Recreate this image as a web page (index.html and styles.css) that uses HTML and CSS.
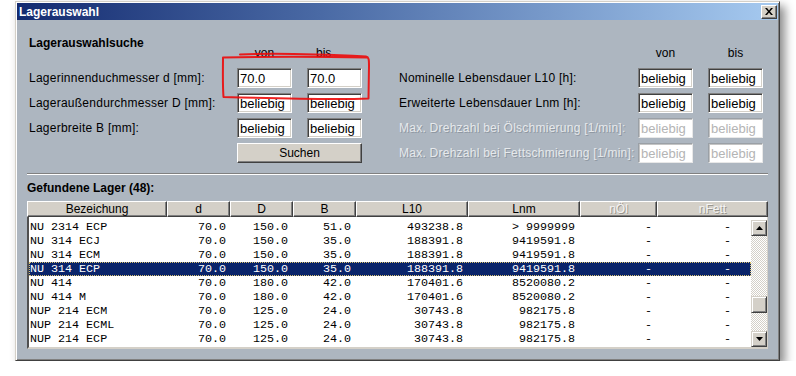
FILE: index.html
```html
<!DOCTYPE html>
<html lang="de">
<head>
    <meta charset="UTF-8">
    <meta name="viewport" content="width=device-width, initial-scale=1.0">
    <title>Lagerauswahl</title>
    <link rel="stylesheet" href="styles.css">
</head>
<body>
    <div class="window">
        <div class="titlebar">
            <span class="title">Lagerauswahl</span>
            <button class="close">
                <svg width="8" height="7" viewBox="0 0 8 7"><path d="M0 0h2l2 2.5L6 0h2L5 3.5 8 7H6L4 4.5 2 7H0l3-3.5z" fill="#000"/></svg>
            </button>
        </div>
        <div class="panel">
            <div class="search">
                <div class="heading">Lagerauswahlsuche</div>
                <div class="filters">
                    <div class="filter-grid left">
                        <span></span>
                        <span class="range-head">von</span>
                        <span class="range-head bis-left">bis</span>

                        <label>Lagerinnenduchmesser d [mm]:</label>
                        <input type="text" value="70.0">
                        <input type="text" value="70.0">

                        <label>Lagerau&szlig;endurchmesser D [mm]:</label>
                        <input type="text" value="beliebig">
                        <input type="text" value="beliebig">

                        <label>Lagerbreite B [mm]:</label>
                        <input type="text" value="beliebig">
                        <input type="text" value="beliebig">

                        <span></span>
                        <button class="search-btn">Suchen</button>
                    </div>
                    <div class="filter-grid right">
                        <span></span>
                        <span class="range-head">von</span>
                        <span class="range-head">bis</span>

                        <label>Nominelle Lebensdauer L10 [h]:</label>
                        <input type="text" value="beliebig">
                        <input type="text" value="beliebig">

                        <label>Erweiterte Lebensdauer Lnm [h]:</label>
                        <input type="text" value="beliebig">
                        <input type="text" value="beliebig">

                        <label class="disabled">Max. Drehzahl bei &Ouml;lschmierung [1/min]:</label>
                        <input type="text" value="beliebig" disabled>
                        <input type="text" value="beliebig" disabled>

                        <label class="disabled">Max. Drehzahl bei Fettschmierung [1/min]:</label>
                        <input type="text" value="beliebig" disabled>
                        <input type="text" value="beliebig" disabled>
                    </div>
                </div>
            </div>

            <div class="divider"></div>

            <div class="results">
                <div class="heading">Gefundene Lager (48):</div>
                <div class="list">
                    <div class="list-head">
                        <span>Bezeichung</span>
                        <span>d</span>
                        <span>D</span>
                        <span>B</span>
                        <span>L10</span>
                        <span>Lnm</span>
                        <span class="disabled">n&Ouml;l</span>
                        <span class="disabled">nFett</span>
                    </div>
                    <div class="list-body">
                        <div class="rows">
                            <div class="row"><span>NU 2314 ECP</span><span>70.0</span><span>150.0</span><span>51.0</span><span>493238.8</span><span>&gt; 9999999</span><span>-</span><span>-</span></div>
                            <div class="row"><span>NU 314 ECJ</span><span>70.0</span><span>150.0</span><span>35.0</span><span>188391.8</span><span>9419591.8</span><span>-</span><span>-</span></div>
                            <div class="row"><span>NU 314 ECM</span><span>70.0</span><span>150.0</span><span>35.0</span><span>188391.8</span><span>9419591.8</span><span>-</span><span>-</span></div>
                            <div class="row selected"><span>NU 314 ECP</span><span>70.0</span><span>150.0</span><span>35.0</span><span>188391.8</span><span>9419591.8</span><span>-</span><span>-</span></div>
                            <div class="row"><span>NU 414</span><span>70.0</span><span>180.0</span><span>42.0</span><span>170401.6</span><span>8520080.2</span><span>-</span><span>-</span></div>
                            <div class="row"><span>NU 414 M</span><span>70.0</span><span>180.0</span><span>42.0</span><span>170401.6</span><span>8520080.2</span><span>-</span><span>-</span></div>
                            <div class="row"><span>NUP 214 ECM</span><span>70.0</span><span>125.0</span><span>24.0</span><span>30743.8</span><span>982175.8</span><span>-</span><span>-</span></div>
                            <div class="row"><span>NUP 214 ECML</span><span>70.0</span><span>125.0</span><span>24.0</span><span>30743.8</span><span>982175.8</span><span>-</span><span>-</span></div>
                            <div class="row"><span>NUP 214 ECP</span><span>70.0</span><span>125.0</span><span>24.0</span><span>30743.8</span><span>982175.8</span><span>-</span><span>-</span></div>
                        </div>
                        <div class="vscroll">
                            <div class="sb-btn">
                                <svg width="7" height="4" viewBox="0 0 7 4"><path d="M3.5 0L7 4H0z" fill="#000"/></svg>
                            </div>
                            <div class="sb-track"><div class="sb-thumb"></div></div>
                            <div class="sb-btn">
                                <svg width="7" height="4" viewBox="0 0 7 4"><path d="M0 0h7L3.5 4z" fill="#000"/></svg>
                            </div>
                        </div>
                    </div>
                </div>
            </div>
        </div>

        <!-- hand drawn marker around the d filter -->
        <svg class="marker" width="765" height="360" viewBox="0 0 765 360">
            <path d="M225 54.5C260 53 320 55 351 56.5C354 57 354 60 354 66L353.5 98.5C330 99.5 262 98.5 208.5 97C207.5 85 208 70 208 57.5C232 57 300 56.5 352 57.5" fill="none" stroke="#ec0a0a" stroke-width="2" stroke-linecap="round" stroke-linejoin="round" opacity="0.9"/>
        </svg>
    </div>
</body>
</html>
```

FILE: styles.css
```css
*{
    box-sizing: border-box;
}
body{
    margin: 0;
    background: #ffffff;
    font-family: "Liberation Sans", Arial, sans-serif;
    font-size: 12px;
    color: #000;
}
.window{
    position: relative;
    width: 765px;
    height: 360px;
    margin: 1px 0 0 15px;
    padding: 1px;
    display: flex;
    flex-direction: column;
    background: #d4d0c8;
    border: 1px solid;
    border-color: #d4d0c8 #404040 #404040 #d4d0c8;
    box-shadow: inset 1px 1px #ffffff, inset -1px -1px #808080, 5px 5px 9px rgba(0, 0, 0, 0.45);
}
.titlebar{
    height: 17px;
    display: flex;
    align-items: center;
    justify-content: space-between;
    padding: 0 1px 0 2px;
    background: linear-gradient(to right, #142b70, #4a6aa5 40%, #a6caf0);
}
.title{
    color: #fff;
    font-weight: bold;
    font-size: 12px;
}
.close{
    width: 16px;
    height: 14px;
    padding: 0;
    display: flex;
    align-items: center;
    justify-content: center;
    background: #d4d0c8;
    border: 1px solid;
    border-color: #ffffff #404040 #404040 #ffffff;
    box-shadow: inset -1px -1px #808080;
}
.panel{
    flex: 1;
    display: flex;
    flex-direction: column;
    background: #adb6c0;
}
.heading{
    font-weight: bold;
    line-height: 14px;
}
.search{
    padding: 16px 0 0 12px;
}
.filters{
    display: flex;
    margin-top: -4px;
}
.filter-grid{
    display: grid;
    grid-template-rows: auto repeat(4, 20px);
    column-gap: 15px;
    row-gap: 5px;
    align-items: center;
}
.filter-grid.left{
    grid-template-columns: 193px 55px 55px;
}
.filter-grid.right{
    grid-template-columns: 224px 55px 55px;
    margin-left: 37px;
}
.range-head{
    line-height: 14px;
    margin-bottom: 3px;
    text-align: center;
}
.bis-left{
    text-align: left;
    padding-left: 9px;
}
label{
    white-space: nowrap;
    line-height: 14px;
    letter-spacing: 0.25px;
}
.disabled{
    color: #e6e9ec;
    text-shadow: 1px 1px 0 #8f98a2;
}
input{
    width: 55px;
    height: 20px;
    padding: 0 2px;
    font-family: "Liberation Sans", Arial, sans-serif;
    font-size: 13px;
    color: #000;
    background: #fff;
    border: 1px solid;
    border-color: #808080 #ffffff #ffffff #808080;
    box-shadow: inset 1px 1px #404040, inset -1px -1px #d4d0c8;
    outline: none;
}
input:disabled{
    color: #b4b4b4;
    border-color: #9aa0a6 #e8e8e8 #e8e8e8 #9aa0a6;
    box-shadow: inset 1px 1px #c4c4c4;
}
.search-btn{
    grid-column: 2 / 4;
    height: 20px;
    font-family: "Liberation Sans", Arial, sans-serif;
    font-size: 12px;
    background: #d4d0c8;
    border: 1px solid;
    border-color: #ffffff #404040 #404040 #ffffff;
    box-shadow: inset -1px -1px #808080;
}
.divider{
    margin: 10px 10px 0 10px;
    border-top: 1px solid #808080;
    border-bottom: 1px solid #ffffff;
}
.results{
    padding: 6px 10px 0 10px;
}
.list{
    margin-top: 6px;
}
.list-head{
    display: grid;
    grid-template-columns: 140px 63px 63px 63px 112px 112px 77px 1fr;
    height: 16px;
}
.list-head span{
    text-align: center;
    line-height: 14px;
    background: #d4d0c8;
    border: 1px solid;
    border-color: #ffffff #404040 #404040 #ffffff;
    box-shadow: inset -1px -1px #808080;
}
.list-head .disabled{
    color: #f4f4f4;
    text-shadow: 1px 1px 0 #9a968e;
}
.list-body{
    height: 132px;
    display: flex;
    padding-top: 3px;
    background: #fff;
    border-left: 2px solid #505050;
    border-right: 1px solid #d4d0c8;
    border-bottom: 2px solid #d4d0c8;
}
.rows{
    flex: 1;
    font-family: "Liberation Mono", "Courier New", monospace;
    font-size: 11.7px;
}
.row{
    display: grid;
    grid-template-columns: 138px 63px 63px 63px 112px 112px 77px 1fr;
    height: 14px;
    line-height: 14px;
    white-space: pre;
}
.row span{
    text-align: right;
    padding-right: 5px;
}
.row span:first-child{
    text-align: left;
    padding-left: 1px;
}
.row span:nth-child(2){
    padding-right: 4px;
}
.row span:last-child{
    padding-right: 20px;
}
.row.selected{
    background: #0a246a;
    color: #fff;
    outline: 1px dotted #d8c070;
    outline-offset: -1px;
}
.vscroll{
    width: 16px;
    display: flex;
    flex-direction: column;
}
.sb-btn, .sb-thumb{
    background: #d4d0c8;
    border: 1px solid;
    border-color: #d4d0c8 #404040 #404040 #d4d0c8;
    box-shadow: inset 1px 1px #ffffff, inset -1px -1px #808080;
}
.sb-btn{
    height: 16px;
    display: flex;
    align-items: center;
    justify-content: center;
}
.sb-track{
    flex: 1;
    background: repeating-conic-gradient(#d4d0c8 0 25%, #ffffff 0 50%) 0 0 / 2px 2px;
}
.sb-thumb{
    height: 17px;
    margin-top: 60px;
}
.marker{
    position: absolute;
    left: -1px;
    top: -2px;
    pointer-events: none;
}
```
